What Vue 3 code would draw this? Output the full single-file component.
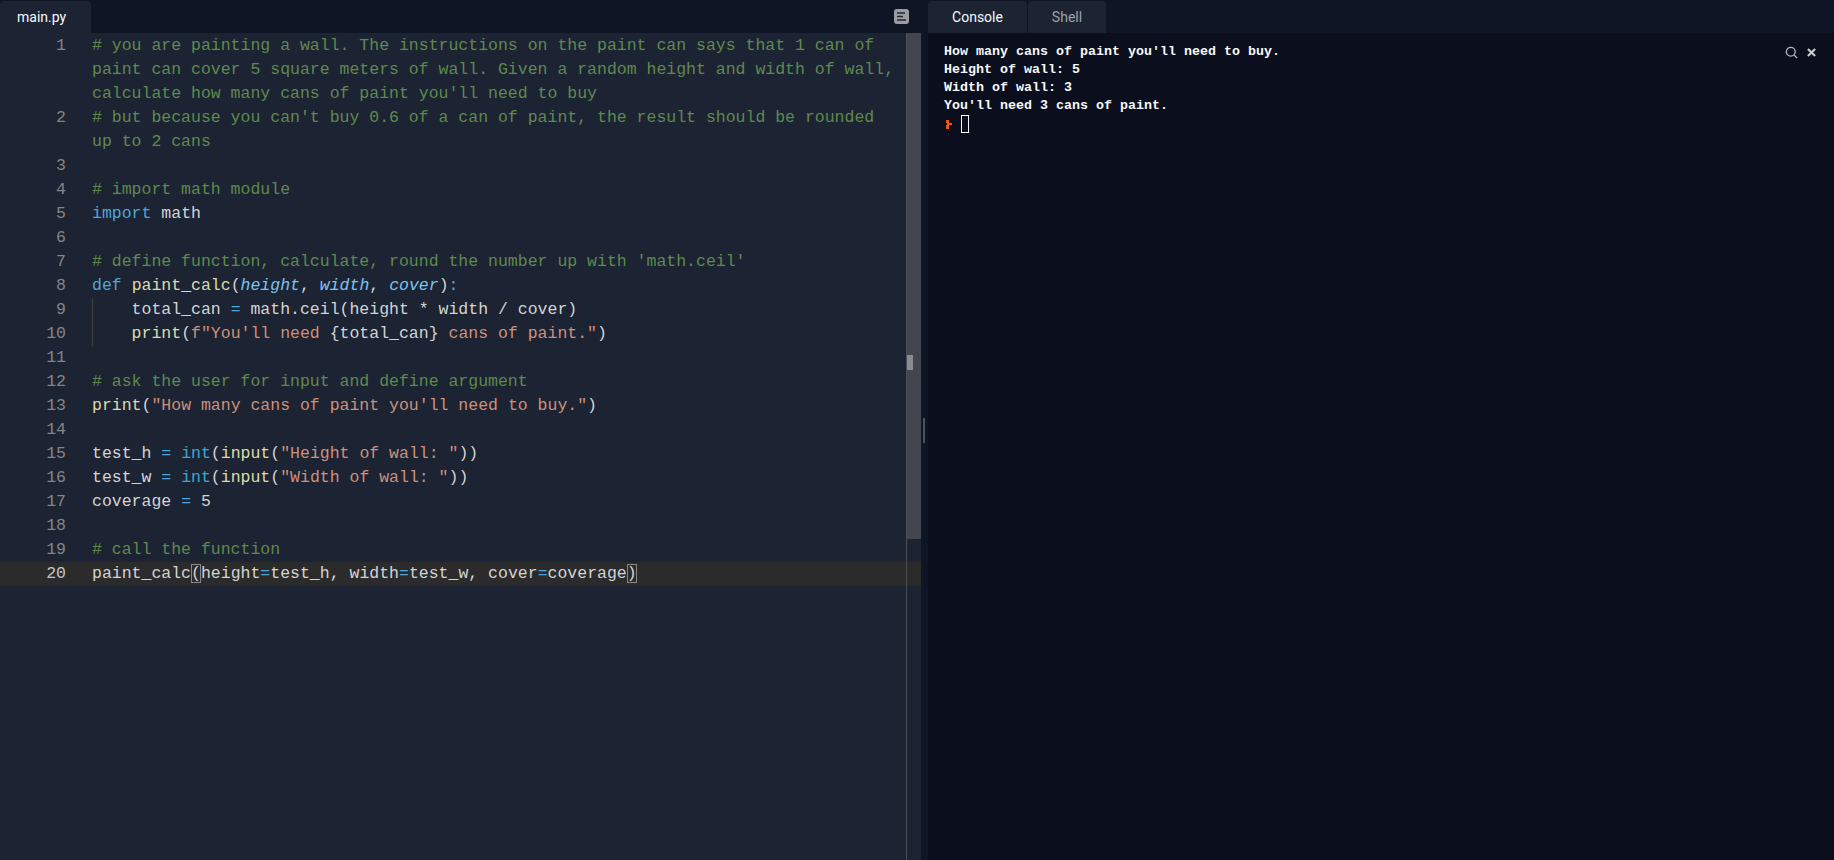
<script setup>
const c = 'c', k = 'k', f = 'f', s = 's', o = 'o', a = 'a', n = 't', b = 'b', y = 'y'
const lines = [
  { n: 1, parts: [[c, '# you are painting a wall. The instructions on the paint can says that 1 can of']] },
  { parts: [[c, "paint can cover 5 square meters of wall. Given a random height and width of wall,"]] },
  { parts: [[c, "calculate how many cans of paint you'll need to buy"]] },
  { n: 2, parts: [[c, "# but because you can't buy 0.6 of a can of paint, the result should be rounded"]] },
  { parts: [[c, 'up to 2 cans']] },
  { n: 3, parts: [] },
  { n: 4, parts: [[c, '# import math module']] },
  { n: 5, parts: [[k, 'import'], [n, ' math']] },
  { n: 6, parts: [] },
  { n: 7, parts: [[c, "# define function, calculate, round the number up with 'math.ceil'"]] },
  { n: 8, parts: [[k, 'def'], [n, ' '], [f, 'paint_calc'], [n, '('], [a, 'height'], [n, ', '], [a, 'width'], [n, ', '], [a, 'cover'], [n, ')'], [k, ':']] },
  { n: 9, guide: true, parts: [[n, '    total_can '], [o, '='], [n, ' math.ceil(height * width / cover)']] },
  { n: 10, guide: true, parts: [[n, '    '], [f, 'print'], [n, '('], [s, 'f"You\'ll need '], [n, '{total_can}'], [s, ' cans of paint."'], [n, ')']] },
  { n: 11, parts: [] },
  { n: 12, parts: [[c, '# ask the user for input and define argument']] },
  { n: 13, parts: [[f, 'print'], [n, '('], [s, '"How many cans of paint you\'ll need to buy."'], [n, ')']] },
  { n: 14, parts: [] },
  { n: 15, parts: [[n, 'test_h '], [o, '='], [n, ' '], [y, 'int'], [n, '('], [f, 'input'], [n, '('], [s, '"Height of wall: "'], [n, '))']] },
  { n: 16, parts: [[n, 'test_w '], [o, '='], [n, ' '], [y, 'int'], [n, '('], [f, 'input'], [n, '('], [s, '"Width of wall: "'], [n, '))']] },
  { n: 17, parts: [[n, 'coverage '], [o, '='], [n, ' 5']] },
  { n: 18, parts: [] },
  { n: 19, parts: [[c, '# call the function']] },
  { n: 20, active: true, parts: [[n, 'paint_calc'], [b, '('], [n, 'height'], [o, '='], [n, 'test_h, width'], [o, '='], [n, 'test_w, cover'], [o, '='], [n, 'coverage'], [b, ')']] },
]
const output = [
  'How many cans of paint you\'ll need to buy.',
  'Height of wall: 5',
  'Width of wall: 3',
  'You\'ll need 3 cans of paint.',
]
</script>

<template>
  <div class="app">
    <section class="left">
      <header class="tabbar">
        <div class="tab">main.py</div>
        <div class="spacer"></div>
        <svg class="format" width="15" height="15" viewBox="0 0 15 15">
          <rect width="15" height="15" rx="3" fill="#9a9c9f" />
          <path d="M3 4h8M3 7.5h6M3 11h9" stroke="#23262d" stroke-width="1.6" fill="none" />
        </svg>
      </header>
      <div class="editor">
        <div class="code">
          <div v-for="(line, i) in lines" :key="i" class="line" :class="{ active: line.active }">
            <span class="num">{{ line.n }}</span>
            <span class="text" :class="{ guide: line.guide }"><span v-for="(part, j) in line.parts" :key="j" :class="part[0]">{{ part[1] }}</span></span>
          </div>
        </div>
        <div class="scrollbar">
          <div class="track">
            <div class="mark"></div>
          </div>
        </div>
      </div>
    </section>
    <div class="divider"><div class="handle"></div></div>
    <section class="right">
      <header class="tabbar right-tabs">
        <div class="tab rtab">Console</div>
        <div class="tab rtab dim">Shell</div>
      </header>
      <div class="console">
        <div class="tools">
          <svg width="13" height="13" viewBox="0 0 14 14" fill="none" stroke="#b5b8bd" stroke-width="1.4">
            <circle cx="6.2" cy="6.2" r="4.8" />
            <path d="M9.8 9.8L13 13" />
          </svg>
          <svg width="9" height="9" viewBox="0 0 10 10" fill="none" stroke="#c9cbce" stroke-width="2.4">
            <path d="M1 1L9 9M9 1L1 9" />
          </svg>
        </div>
        <div v-for="text in output" :key="text" class="out">{{ text }}</div>
        <div class="prompt">
          <svg class="chevron" width="6" height="9" viewBox="0 0 6 9"><path d="M0 0h3v3h3v2H3v4H0V5h1V3H0z" fill="#f2520e" /></svg>
          <span class="cursor"></span>
        </div>
      </div>
    </section>
  </div>
</template>

<style>
html, body { margin: 0; background: #0e1525; }
</style>

<style scoped>
.app {
  display: flex;
  width: 1834px;
  height: 860px;
  overflow: hidden;
  background: #0e1525;
}
.left {
  width: 921px;
  display: flex;
  flex-direction: column;
  flex: none;
}
.tabbar {
  height: 33px;
  flex: none;
  display: flex;
  align-items: stretch;
  background: #0e1525;
}
.tab {
  width: 91px;
  margin-top: 1px;
  background: #1c2333;
  border-radius: 4px 4px 0 0;
  color: #f5f9fc;
  font: 14px/32px Roboto, "Noto Sans", sans-serif;
  padding-left: 17px;
  box-sizing: border-box;
}
.spacer { flex: 1; }
.format { margin: 9px 12px 0 0; }
.editor {
  flex: 1;
  display: flex;
  background: #1c2333;
  min-height: 0;
}
.code {
  flex: 1;
  padding-top: 1px;
  min-width: 0;
}
.line {
  display: flex;
  height: 24px;
  font: 16.5px/24px "Liberation Mono", monospace;
  white-space: pre;
  color: #d4d4d4;
}
.line.active {
  background: #2b2b2b;
  margin-right: -15px;
}
.num {
  width: 66px;
  flex: none;
  text-align: right;
  color: #858585;
}
.active .num { color: #c6c6c6; }
.text {
  margin-left: 26px;
  flex: 1;
  position: relative;
  color: #d4d4d4;
}
.guide::before {
  content: "";
  position: absolute;
  left: 0;
  top: 0;
  bottom: 0;
  width: 1px;
  background: #404040;
}
.c { color: #5f8a4c; }
.k { color: #4fa6dc; }
.f { color: #dcdcaa; }
.y { color: #3ba9cf; }
.s { color: #ce9178; }
.o { color: #4fa6dc; }
.a { color: #7cc4f0; font-style: italic; }
.t { color: #d4d4d4; }
.b { color: #d4d4d4; outline: 1px solid #888; outline-offset: -1px; }
.scrollbar {
  width: 14px;
  flex: none;
  border-left: 1px solid #4b4e55;
  position: relative;
  z-index: 1;
}
.track {
  height: 506px;
  background: #43464e;
  padding-top: 322px;
  box-sizing: border-box;
}
.mark {
  height: 15px;
  width: 6px;
  background: #8a8c8f;
}
.divider {
  width: 7px;
  flex: none;
  background: #0e1525;
  position: relative;
}
.handle {
  position: absolute;
  left: 2px;
  top: 418px;
  width: 2px;
  height: 25px;
  background: #4e515a;
}
.right {
  flex: 1;
  min-width: 0;
  display: flex;
  flex-direction: column;
}
.right-tabs {
  gap: 1px;
}
.rtab {
  width: 99px;
  padding: 0;
  text-align: center;
}
.rtab.dim {
  width: 78px;
  color: #9da2a6;
}
.console {
  flex: 1;
  position: relative;
  background: #0b0e1d;
  padding: 10px 0 0 16px;
  font: bold 13.33px/18px "Liberation Mono", monospace;
  color: #f5f9fc;
}
.out { height: 18px; white-space: pre; }
.tools {
  position: absolute;
  right: 18px;
  top: 13px;
  display: flex;
  align-items: center;
  gap: 9px;
}
.prompt {
  display: flex;
  align-items: center;
  gap: 9px;
  height: 18px;
}
.chevron { margin-left: 2px; margin-top: 1px; }
.cursor {
  width: 8px;
  height: 18px;
  border: 1px solid #f5f9fc;
  box-sizing: border-box;
}
</style>
